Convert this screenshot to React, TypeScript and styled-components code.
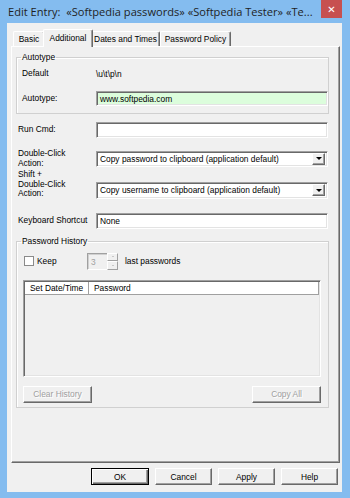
import React from "react";
import styled, { createGlobalStyle } from "styled-components";

const Global = createGlobalStyle`
  html, body { margin: 0; padding: 0; background: #84bcef; }
  body { font-family: "Liberation Sans", Arial, sans-serif; font-size: 8.4px; color: #000; }
  * { box-sizing: border-box; }
`;

const Window = styled.div`
  position: relative;
  width: 350px;
  height: 498px;
  background: #84bcef;
  display: flex;
  flex-direction: column;
  padding: 0 8px 6px 7px;
  overflow: hidden;
`;

const TitleBar = styled.div`
  height: 23px;
  display: flex;
  align-items: flex-start;
  justify-content: space-between;
`;

const TitleText = styled.div`
  font-family: "Open Sans", "Noto Sans", sans-serif;
  font-size: 11.1px;
  line-height: 23px;
  color: #1f1f1f;
  margin-left: 1px;
  white-space: nowrap;
`;

const CloseButton = styled.div`
  width: 21px;
  height: 18px;
  background: #c75050;
  color: #fff;
  display: flex;
  align-items: center;
  justify-content: center;
  font-family: "DejaVu Sans", sans-serif;
  font-size: 10px;
  font-weight: bold;
`;

const Client = styled.div`
  flex: 1;
  background: #f0f0f0;
  display: flex;
  flex-direction: column;
  padding: 6px 2px 0 4px;
`;

const TabStrip = styled.div`
  height: 17px;
  display: flex;
  align-items: flex-end;
  padding-left: 2px;
  position: relative;
  z-index: 1;
`;

const Tab = styled.div<{ $active?: boolean; $w: number }>`
  width: ${(p) => p.$w}px;
  height: ${(p) => (p.$active ? 18 : 15)}px;
  margin: ${(p) => (p.$active ? "0 -2px -1px -2px" : "0")};
  background: #f0f0f0;
  border-top: 1px solid #fff;
  border-left: 1px solid #fff;
  border-right: 1px solid #696969;
  box-shadow: inset -1px 0 0 #a0a0a0;
  border-radius: 2px 2px 0 0;
  display: flex;
  align-items: center;
  justify-content: center;
  padding-bottom: ${(p) => (p.$active ? 2 : 0)}px;
  white-space: nowrap;
  position: relative;
  z-index: ${(p) => (p.$active ? 2 : 1)};
`;

const Panel = styled.div`
  flex: 1;
  border: 1px solid;
  border-color: #fff #696969 #696969 #fff;
  box-shadow: inset -1px -1px 0 #a0a0a0;
  padding: 5px 10px 0 4px;
  display: flex;
  flex-direction: column;
`;

const Group = styled.fieldset<{ $mt?: number }>`
  margin: ${(p) => p.$mt ?? 0}px 0 0 0;
  padding: 0;
  min-width: 0;
  border: 1px solid #d0d0d0;
  box-shadow: inset 1px 1px 0 #fff;
`;

const Legend = styled.legend`
  padding: 0 1px;
  margin-left: 4px;
  line-height: 11px;
`;

const GroupBody = styled.div<{ $pl: number; $pr: number; $pb: number }>`
  padding: 0 ${(p) => p.$pr}px ${(p) => p.$pb}px ${(p) => p.$pl}px;
  display: flex;
  flex-direction: column;
`;

const Row = styled.div<{ $mt: number; $align?: string; $pl?: number; $pr?: number }>`
  display: flex;
  align-items: ${(p) => p.$align ?? "center"};
  margin-top: ${(p) => p.$mt}px;
  padding-left: ${(p) => p.$pl ?? 0}px;
  padding-right: ${(p) => p.$pr ?? 0}px;
`;

const Label = styled.div<{ $w: number }>`
  width: ${(p) => p.$w}px;
  flex-shrink: 0;
  line-height: 9.5px;
`;

const ValueText = styled.div`
  line-height: 12px;
`;

const TextField = styled.div<{ $h: number; $green?: boolean }>`
  flex: 1;
  height: ${(p) => p.$h}px;
  background: ${(p) => (p.$green ? "#dcfddc" : "#fff")};
  border-top: 1px solid #a0a0a0;
  border-left: 1px solid #a0a0a0;
  border-right: 1px solid #fff;
  border-bottom: 1px solid #fff;
  box-shadow: inset 1px 1px 0 #696969, inset -1px -1px 0 #e3e3e3;
  display: flex;
  align-items: center;
  padding-left: 3px;
  white-space: nowrap;
`;

const Combo = styled(TextField)`
  justify-content: space-between;
  padding-right: 2px;
`;

const DropButton = styled.div`
  width: 13px;
  height: 12px;
  background: #f0f0f0;
  border: 1px solid;
  border-color: #fff #696969 #696969 #fff;
  box-shadow: inset -1px -1px 0 #a0a0a0;
  display: flex;
  align-items: center;
  justify-content: center;
  &::after {
    content: "";
    border-left: 3px solid transparent;
    border-right: 3px solid transparent;
    border-top: 3px solid #000;
  }
`;

const CheckBox = styled.div`
  width: 10px;
  height: 10px;
  background: #fff;
  border: 1px solid #8a8a8a;
  margin-left: 1px;
`;

const KeepText = styled.div`
  margin-left: 3px;
  width: 50px;
`;

const Spin = styled.div`
  display: flex;
  height: 17px;
`;

const SpinInput = styled.div`
  width: 20px;
  height: 17px;
  background: #f0f0f0;
  border-top: 1px solid #a0a0a0;
  border-left: 1px solid #a0a0a0;
  border-bottom: 1px solid #fff;
  box-shadow: inset 1px 1px 0 #d0d0d0;
  color: #a0a0a0;
  padding: 3px 0 0 3px;
`;

const SpinButtons = styled.div`
  width: 11px;
  display: flex;
  flex-direction: column;
`;

const SpinHalf = styled.div<{ $up?: boolean }>`
  flex: 1;
  border: 1px solid;
  border-color: #fff #a0a0a0 #a0a0a0 #fff;
  display: flex;
  align-items: center;
  justify-content: center;
  &::after {
    content: "";
    border-left: 1.5px solid transparent;
    border-right: 1.5px solid transparent;
    ${(p) => (p.$up ? "border-bottom: 1.5px solid #a0a0a0;" : "border-top: 1.5px solid #a0a0a0;")}
  }
`;

const AfterSpin = styled.div`
  margin-left: 7px;
`;

const ListView = styled.div`
  margin-top: 10px;
  height: 97px;
  border-top: 1px solid #a0a0a0;
  border-left: 1px solid #a0a0a0;
  border-right: 1px solid #fff;
  border-bottom: 1px solid #fff;
  box-shadow: inset 1px 1px 0 #696969, inset -1px -1px 0 #e3e3e3;
  background: #f0f0f0;
  padding: 1px 1px 0 1px;
`;

const ListHeader = styled.div`
  display: flex;
  height: 13px;
  background: #fff;
  border-bottom: 1px solid #a0a0a0;
`;

const HeaderCell = styled.div<{ $w?: number }>`
  ${(p) => (p.$w ? `width: ${p.$w}px;` : "flex: 1;")}
  border-right: 1px solid #a0a0a0;
  padding-left: 5px;
  line-height: 12px;
  white-space: nowrap;
`;

const ButtonRow = styled.div<{ $mt: number }>`
  display: flex;
  justify-content: space-between;
  margin-top: ${(p) => p.$mt}px;
`;

const Button = styled.div<{ $w: number; $disabled?: boolean; $default?: boolean }>`
  width: ${(p) => p.$w}px;
  height: 17px;
  background: #f0f0f0;
  border: 1px solid;
  border-color: ${(p) => (p.$default ? "#000" : "#fff #696969 #696969 #fff")};
  box-shadow: ${(p) =>
    p.$default
      ? "inset 1px 1px 0 #fff, inset -1px -1px 0 #696969, inset -2px -2px 0 #a0a0a0"
      : "inset -1px -1px 0 #a0a0a0"};
  display: flex;
  align-items: center;
  justify-content: center;
  color: ${(p) => (p.$disabled ? "#a0a0a0" : "#000")};
  text-shadow: ${(p) => (p.$disabled ? "1px 1px 0 #fff" : "none")};
  white-space: nowrap;
`;

const Footer = styled.div`
  height: 29px;
  display: flex;
  justify-content: flex-end;
  align-items: flex-start;
  gap: 6px;
  padding: 5px 2px 0 0;
`;

export default function App() {
  return (
    <>
      <Global />
      <Window>
        <TitleBar>
          <TitleText>Edit Entry:&nbsp; «Softpedia passwords» «Softpedia Tester» «Te...</TitleText>
          <CloseButton>✕</CloseButton>
        </TitleBar>
        <Client>
          <TabStrip>
            <Tab $w={32}>Basic</Tab>
            <Tab $w={50} $active>Additional</Tab>
            <Tab $w={69}>Dates and Times</Tab>
            <Tab $w={71}>Password Policy</Tab>
          </TabStrip>
          <Panel>
            <Group>
              <Legend>Autotype</Legend>
              <GroupBody $pl={5} $pr={0} $pb={7}>
                <Row $mt={5}>
                  <Label $w={74}>Default</Label>
                  <ValueText>\u\t\p\n</ValueText>
                </Row>
                <Row $mt={11}>
                  <Label $w={74}>Autotype:</Label>
                  <TextField $h={15} $green>www.softpedia.com</TextField>
                </Row>
              </GroupBody>
            </Group>
            <Row $mt={8} $pl={2} $pr={1}>
              <Label $w={78}>Run Cmd:</Label>
              <TextField $h={16} />
            </Row>
            <Row $mt={11} $pl={2} $pr={1}>
              <Label $w={78}>
                Double-Click
                <br />
                Action:
              </Label>
              <Combo $h={16}>
                Copy password to clipboard (application default)
                <DropButton />
              </Combo>
            </Row>
            <Row $mt={2} $pl={2} $pr={1} $align="flex-end">
              <Label $w={78}>
                Shift +
                <br />
                Double-Click
                <br />
                Action:
              </Label>
              <Combo $h={17}>
                Copy username to clipboard (application default)
                <DropButton />
              </Combo>
            </Row>
            <Row $mt={14} $pl={2} $pr={1}>
              <Label $w={78}>Keyboard Shortcut</Label>
              <TextField $h={16}>None</TextField>
            </Row>
            <Group $mt={7}>
              <Legend>Password History</Legend>
              <GroupBody $pl={6} $pr={7} $pb={4}>
                <Row $mt={6}>
                  <CheckBox />
                  <KeepText>Keep</KeepText>
                  <Spin>
                    <SpinInput>3</SpinInput>
                    <SpinButtons>
                      <SpinHalf $up />
                      <SpinHalf />
                    </SpinButtons>
                  </Spin>
                  <AfterSpin>last passwords</AfterSpin>
                </Row>
                <ListView>
                  <ListHeader>
                    <HeaderCell $w={64}>Set Date/Time</HeaderCell>
                    <HeaderCell>Password</HeaderCell>
                  </ListHeader>
                </ListView>
                <ButtonRow $mt={9}>
                  <Button $w={69} $disabled>Clear History</Button>
                  <Button $w={69} $disabled>Copy All</Button>
                </ButtonRow>
              </GroupBody>
            </Group>
          </Panel>
          <Footer>
            <Button $w={58} $default>OK</Button>
            <Button $w={57}>Cancel</Button>
            <Button $w={57}>Apply</Button>
            <Button $w={57}>Help</Button>
          </Footer>
        </Client>
      </Window>
    </>
  );
}
